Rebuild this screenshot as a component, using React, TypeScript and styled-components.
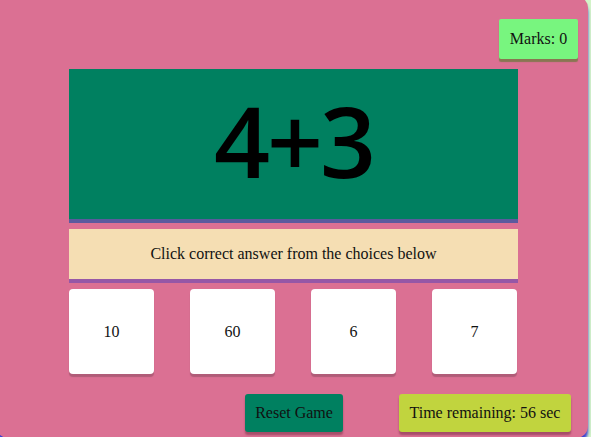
import React from "react";
import styled, { createGlobalStyle } from "styled-components";

const Global = createGlobalStyle`
  html, body { margin: 0; padding: 0; }
  body {
    background: #d2f3c8;
    font-family: "Liberation Serif", "Times New Roman", serif;
    overflow: hidden;
  }
`;

const Board = styled.div`
  box-sizing: border-box;
  width: 592px;
  height: 442px;
  margin: -4px 0 0 -4px;
  background: #db7093;
  border-radius: 12px;
  box-shadow: 0 5px 3px #3b3fd0;
  padding-top: 23px;
  display: flex;
  flex-direction: column;
`;

const TopBar = styled.div`
  display: flex;
  justify-content: flex-end;
  padding-right: 10px;
`;

const Marks = styled.div`
  width: 79px;
  height: 40px;
  background: #78f57f;
  border-radius: 2px;
  box-shadow: 0 3px 1px rgba(110, 120, 60, 0.75);
  display: flex;
  align-items: center;
  justify-content: center;
  font-size: 16px;
  color: #111;
`;

const Main = styled.div`
  margin: 10px 0 0 73px;
  width: 449px;
  display: flex;
  flex-direction: column;
`;

const Question = styled.div`
  box-sizing: content-box;
  height: 150px;
  background: #008060;
  border-bottom: 4px solid #5b5a9e;
  display: flex;
  align-items: center;
  justify-content: center;
  font-family: "Comic Sans MS", "Open Sans", sans-serif;
  font-weight: 600;
  font-size: 98px;
  letter-spacing: -3px;
  line-height: 1;
  color: #000;
`;

const Expr = styled.span`
  margin-top: -8px;
`;

const Instruction = styled.div`
  margin-top: 6px;
  height: 50px;
  background: #f5deb3;
  border-bottom: 4px solid #9657a6;
  display: flex;
  align-items: center;
  justify-content: center;
  font-size: 16px;
  color: #111;
`;

const Choices = styled.div`
  margin-top: 6px;
  display: flex;
  justify-content: space-between;
  padding-right: 1px;
`;

const Choice = styled.div`
  width: 85px;
  height: 85px;
  background: #fff;
  border-radius: 4px;
  box-shadow: 0 3px 1px #b05c78;
  display: flex;
  align-items: center;
  justify-content: center;
  font-size: 16px;
  color: #111;
`;

const Footer = styled.div`
  margin-top: 20px;
  padding-left: 249px;
  display: flex;
  gap: 56px;
`;

const Action = styled.div<{ $bg: string; $w: number }>`
  width: ${(p) => p.$w}px;
  height: 38px;
  background: ${(p) => p.$bg};
  border-radius: 3px;
  box-shadow: 0 3px 2px rgba(120, 50, 70, 0.55);
  display: flex;
  align-items: center;
  justify-content: center;
  font-size: 16px;
  color: #111;
`;

export default function App() {
  const choices = ["10", "60", "6", "7"];
  return (
    <>
      <Global />
      <Board>
        <TopBar>
          <Marks>Marks: 0</Marks>
        </TopBar>
        <Main>
          <Question>
            <Expr>4+3</Expr>
          </Question>
          <Instruction>Click correct answer from the choices below</Instruction>
          <Choices>
            {choices.map((c) => (
              <Choice key={c}>{c}</Choice>
            ))}
          </Choices>
        </Main>
        <Footer>
          <Action $bg="#008060" $w={98}>Reset Game</Action>
          <Action $bg="#c1d43e" $w={172}>Time remaining: 56 sec</Action>
        </Footer>
      </Board>
    </>
  );
}
